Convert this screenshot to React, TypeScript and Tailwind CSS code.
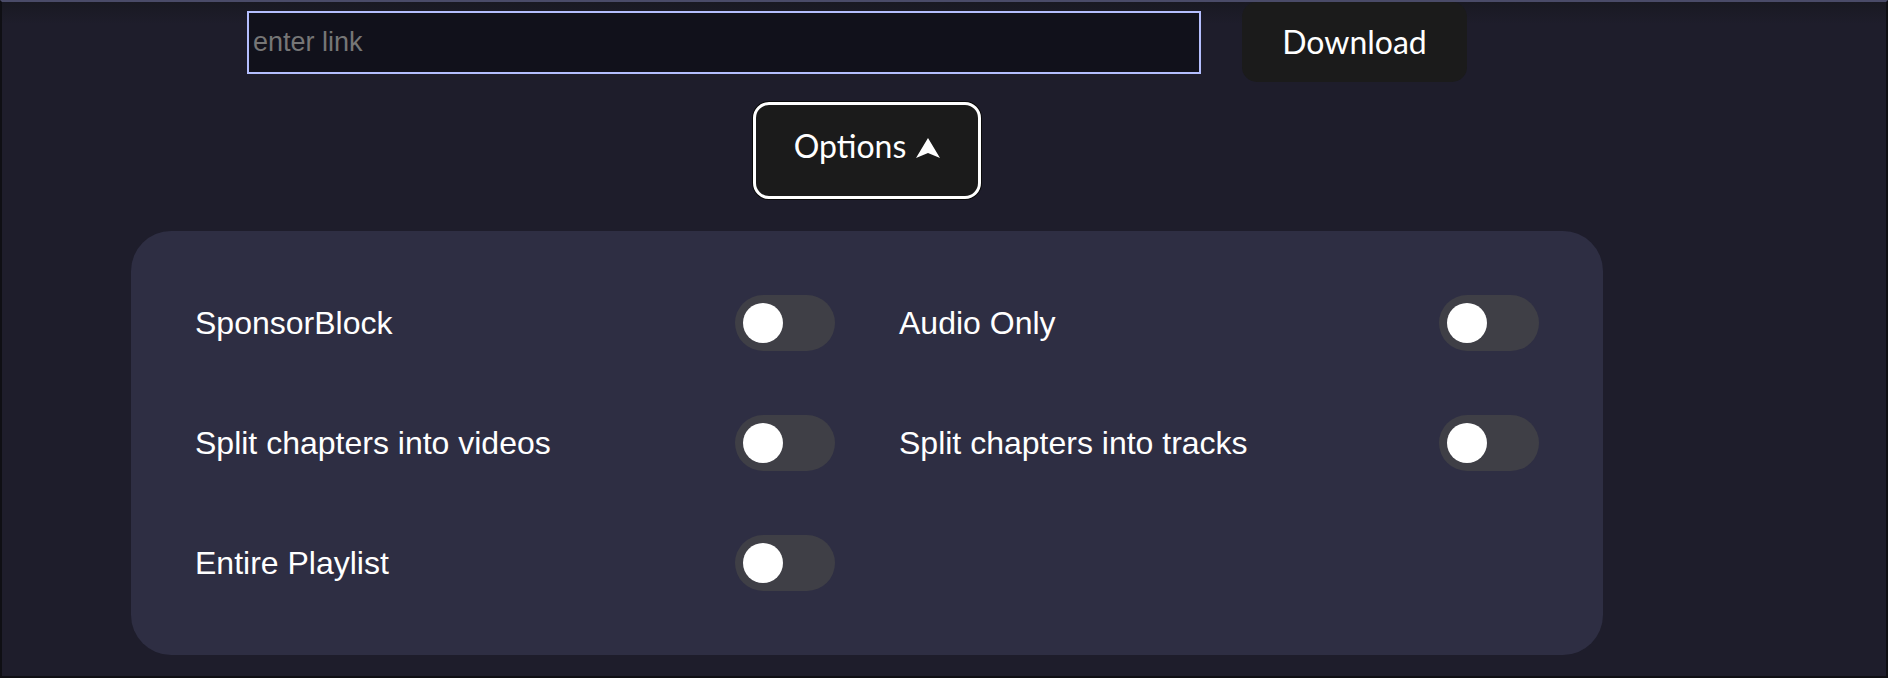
const options = [
  { id: "sponsorblock", label: "SponsorBlock" },
  { id: "audio", label: "Audio Only" },
  { id: "split-videos", label: "Split chapters into videos" },
  { id: "split-tracks", label: "Split chapters into tracks" },
  { id: "playlist", label: "Entire Playlist" },
];

function Toggle() {
  return (
    <button
      type="button"
      className="flex h-[56px] w-[100px] shrink-0 items-center rounded-full bg-[#3f3f46] px-2"
    >
      <span className="block h-10 w-10 rounded-full bg-white" />
    </button>
  );
}

export default function App() {
  return (
    <div className="h-[678px] w-full overflow-hidden border-2 border-[#0f0f14] border-t-[#4a4b68] bg-[linear-gradient(to_bottom,#191922_0px,#1e1d2b_22px)] font-['Liberation_Sans',Arial,sans-serif]">
      <div className="flex w-[1730px] flex-col items-center">
        {/* link input + download */}
        <div className="mr-[20px] flex w-[1220px] items-center gap-[41px]">
          <input
            type="text"
            placeholder="enter link"
            className="h-[63px] w-[954px] border-2 border-[#b4befe] bg-[#11111b] px-1 text-[27px] text-white outline-none placeholder:text-[#767676]"
          />
          <button
            type="button"
            className="flex h-[80px] w-[225px] items-center justify-center rounded-[15px] bg-[#1b1b1b] font-['Lato',sans-serif] text-[32px] text-white"
          >
            Download
          </button>
        </div>

        <button
          type="button"
          className="mt-5 flex h-[97px] w-[228px] items-center justify-center gap-2.5 rounded-2xl border-[3px] border-white bg-[#1b1b1b] pb-[10px] font-['Lato',sans-serif] text-[32px] text-white shadow-[0_0_0_1px_#0a0a0a]"
        >
          Options
          <svg width="24" height="20" viewBox="0 0 24 20" className="mt-1">
            <polygon points="12,0 24,20 12,15 0,20" fill="white" />
          </svg>
        </button>

        {/* options panel */}
        <div className="mt-8 grid w-[1472px] grid-cols-2 gap-16 rounded-[40px] bg-[#2e2e43] p-16">
          {options.map((o) => (
            <div key={o.id} className="flex h-[56px] items-center justify-between">
              <span className="text-[32px] leading-none text-white">{o.label}</span>
              <Toggle />
            </div>
          ))}
        </div>
      </div>
    </div>
  );
}
